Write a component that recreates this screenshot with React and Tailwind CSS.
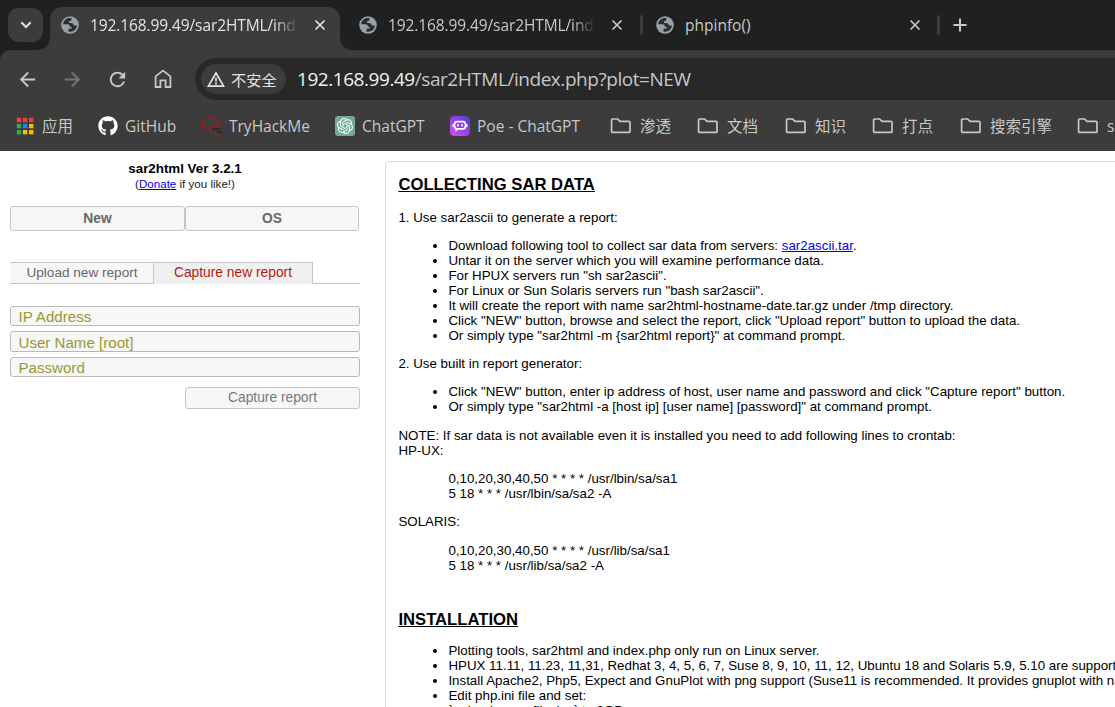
import { MdArrowBack, MdArrowForward, MdRefresh } from "react-icons/md";
import { SiOpenai } from "react-icons/si";
import { FaGithub } from "react-icons/fa";

function Globe() {
  return (
    <svg viewBox="0 0 18 18" className="size-[18px] shrink-0">
      <circle cx="9" cy="9" r="8.8" fill="#9aa0a6" />
      <path d="M10.6 2.2 C6 1.4 2.4 4.4 2.1 8.2 L6.4 8.2 C8.4 8.2 8.8 9.4 8.9 10.6 L10.8 10.9 L10.6 12.4 L7.6 12.8 L7.4 15.6 C11.8 16.6 15.6 13.6 15.9 9.6 L13 9.6 L11.6 7.2 L8.2 6.9 L8 5.2 L10.2 4.4 Z" fill="#2b2e30" />
    </svg>
  );
}

function Close({ className }) {
  return (
    <svg viewBox="0 0 12 12" className={className}>
      <path d="M1.5 1.5 10.5 10.5M10.5 1.5 1.5 10.5" stroke="currentColor" strokeWidth="1.7" />
    </svg>
  );
}

function Folder() {
  return (
    <svg viewBox="0 0 22 18" className="h-[18px] w-[22px] shrink-0" fill="none" stroke="#c7c7c7" strokeWidth="1.7">
      <path d="M2.5 2H7.6L10 4.4H19Q20 4.4 20 5.4V14.4Q20 15.4 19 15.4H2.6Q1.6 15.4 1.6 14.4V3Q1.6 2 2.5 2Z" />
    </svg>
  );
}

const folders = [
  ["渗透", "w-[87px]"],
  ["文档", "w-[88px]"],
  ["知识", "w-[87px]"],
  ["打点", "w-[88px]"],
  ["搜索引擎", "w-[117px]"],
  ["s", "w-[60px]"],
];

const appColors = ["#ea4335", "#ea4335", "#ea4335", "#34a853", "#1a87f0", "#fbbc04", "#34a853", "#fbbc04", "#fbbc04"];

function TabTitle({ children }) {
  return (
    <span className="ml-[11px] w-[212px] overflow-hidden pt-0.5 text-[15.5px] tracking-[-0.1px] whitespace-nowrap [mask-image:linear-gradient(90deg,#000_87%,transparent_98%)]">
      {children}
    </span>
  );
}

function Label({ children }) {
  return <span className="pt-0.5 whitespace-nowrap">{children}</span>;
}

function Browser() {
  return (
    <header className="h-[151px] w-[1115px] bg-[#1f2120] font-['Open_Sans','Noto_Sans_CJK_SC',sans-serif]">
      <div className="flex h-[50px] items-end">
        <div className="mb-2 ml-2 flex h-[34px] w-[35px] items-center justify-center rounded-[11px] bg-[#3c3c3c]">
          <svg viewBox="0 0 12 8" className="h-2 w-3" fill="none" stroke="#e3e3e3" strokeWidth="2"><path d="M1.3 1.3 6 6 10.7 1.3" /></svg>
        </div>
        <svg viewBox="0 0 14 14" className="-ml-[7px] size-[14px] shrink-0"><path d="M0 14H14V0Q14 14 0 14Z" fill="#3c3c3c" /></svg>
        <div className="flex h-[43px] w-[290px] items-center rounded-t-[12px] bg-[#3c3c3c] pb-[7px] pl-[11px] text-[#e3e3e3]">
          <Globe />
          <TabTitle>192.168.99.49/sar2HTML/index</TabTitle>
          <Close className="ml-[12px] size-[12px]" />
        </div>
        <svg viewBox="0 0 14 14" className="size-[14px] shrink-0"><path d="M0 0V14H14Q0 14 0 0Z" fill="#3c3c3c" /></svg>
        <div className="flex h-[43px] items-center pb-[7px] pl-[5px] text-[#c7c7c7]">
          <Globe />
          <TabTitle>192.168.99.49/sar2HTML/index</TabTitle>
          <Close className="ml-[11px] size-[12px]" />
          <div className="ml-[17px] h-5 w-[3px] rounded bg-[#3c3c3c]" />
          <div className="ml-[13px] flex items-center"><Globe /></div>
          <span className="ml-[11px] w-[212px] pt-0.5 text-[15.5px]">phpinfo()</span>
          <Close className="ml-[12px] size-[12px]" />
          <div className="ml-[16px] h-5 w-[3px] rounded bg-[#3c3c3c]" />
          <svg viewBox="0 0 14 14" className="ml-[13px] size-[14px]"><path d="M7 .5V13.5M.5 7H13.5" stroke="currentColor" strokeWidth="2" /></svg>
        </div>
      </div>
      <div className="h-[101px] overflow-hidden rounded-tl-[10px] bg-[#3c3c3c] pt-2">
        <div className="flex h-[42px] items-center">
          <MdArrowBack className="ml-4 size-[23px] text-[#c7c7c7]" />
          <MdArrowForward className="ml-[22px] size-[23px] text-[#757575]" />
          <MdRefresh className="ml-[22px] size-[23px] text-[#c7c7c7]" />
          <svg viewBox="0 0 18 20" className="ml-[25px] h-[20px] w-[18px]" fill="none" stroke="#c7c7c7" strokeWidth="1.8"><path d="M1.6 7.4 9 1.6 16.4 7.4V18H11.6V11.4H6.4V18H1.6Z" /></svg>
          <div className="ml-[23px] flex h-[42px] flex-1 items-center rounded-l-full bg-[#282828] pl-1.5">
            <div className="flex h-[30px] w-[85px] items-center rounded-full bg-[#3c3c3c] pl-[6px] text-[15.2px] text-[#e3e3e3]">
              <svg viewBox="0 0 18 17" className="mr-[6px] h-[17px] w-[18px] shrink-0" fill="none" stroke="#e3e3e3" strokeWidth="1.7"><path d="M9 2 16.6 15.2H1.4ZM9 6.4V10.6M9 11.6V13.4" /></svg>
              <Label>不安全</Label>
            </div>
            <span className="ml-[11px] whitespace-nowrap text-[19px] tracking-[-0.45px] text-[#c7c7c7]"><span className="text-[#f1f1f1]">192.168.99.49</span>/sar2HTML/index.php?plot=NEW</span>
          </div>
        </div>
        <div className="flex h-[51px] items-center pl-4 text-[15.5px] text-[#c7c7c7]">
          <div className="flex w-[82px] shrink-0 items-center">
            <svg viewBox="0 0 18 18" className="mr-[8px] size-[18px] shrink-0">
              {appColors.map((c, i) => <rect key={i} x={0.8 + (i % 3) * 6.1} y={0.8 + Math.floor(i / 3) * 6.1} width="4.4" height="4.4" fill={c} />)}
            </svg>
            <Label>应用</Label>
          </div>
          <div className="flex w-[103px] shrink-0 items-center"><FaGithub className="mr-[7px] size-5 shrink-0 text-white" /><Label>GitHub</Label></div>
          <div className="flex w-[134px] shrink-0 items-center">
            <svg viewBox="0 0 22 20" className="mr-[6px] h-5 w-[22px] shrink-0" fill="none" stroke="#c11111" strokeWidth="1.2">
              <path d="M10.5 12H3.4C.2 11.2.3 7 3.8 6.5 3.8 3.8 5.8 3.2 6.8 3.3 8 .5 12.5.4 13.6 3.4 16.3 2.7 18 4.7 17.3 6.7 19.4 7 18.8 8.6 18.6 9" />
              <path d="M11 10.2H19.5M10.5 16H17M14 18.8H19.5" strokeDasharray="2.5 1" strokeWidth="1.2" />
              <path d="M11.5 13H20M16 16H21" stroke="#272727" strokeDasharray="2.5 .7" strokeWidth="2" />
            </svg>
            <Label>TryHackMe</Label>
          </div>
          <div className="flex w-[115px] shrink-0 items-center"><span className="mr-[7px] flex size-5 shrink-0 items-center justify-center rounded-[3px] bg-[#74aa9c]"><SiOpenai className="size-4 text-white" /></span><Label>ChatGPT</Label></div>
          <div className="flex w-[160px] shrink-0 items-center">
            <svg viewBox="0 0 20 20" className="mr-[7px] size-5 shrink-0"><defs><linearGradient id="poe" x1="1" x2="0" y1="0" y2="1"><stop stopColor="#3b49b5" /><stop offset=".45" stopColor="#983cef" /><stop offset="1" stopColor="#d94ef0" /></linearGradient></defs><rect width="20" height="20" rx="4.5" fill="url(#poe)" /><rect x="4" y="4.8" width="12" height="9" rx="2.5" fill="#fff" /><path d="M2.5 8H4V11H2.5ZM16 8H17.5V11H16ZM5.5 13V16L8.5 13Z" fill="#fff" /><rect x="5.4" y="6.4" width="9.2" height="5.6" rx="2" fill="#8a3de8" /><path d="M8 8V10.4M12 8V10.4" stroke="#fff" strokeWidth="1.5" /></svg>
            <Label>Poe - ChatGPT</Label>
          </div>
          {folders.map(([name, width]) => <div key={name} className={`flex shrink-0 items-center gap-[8px] ${width}`}><Folder /><Label>{name}</Label></div>)}
        </div>
      </div>
    </header>
  );
}

function Field({ children, className }) {
  return <div className={`rounded-[3px] border border-[#b9b9b9] bg-[#f7f7f7] pl-[7.5px] text-left text-[15.1px] text-[#999933] ${className}`}>{children}</div>;
}

function Sidebar() {
  return (
    <aside className="w-[350px] shrink-0 text-center">
      <h1 className="pt-2.5 text-[13.333px] leading-[15px] font-bold">sar2html Ver 3.2.1</h1>
      <p className="text-[11.6px] leading-[15px] text-[#222]">(<a className="text-[#0000ee] underline">Donate</a> if you like!)</p>
      <div className="mt-[15px] flex text-[13.8px] font-bold text-[#666]">
        <div className="h-[25px] w-[175px] rounded-[3px] border border-[#c5c5c5] bg-[#f6f6f6] leading-[23px]">New</div>
        <div className="h-[25px] w-[174px] rounded-[3px] border border-[#c5c5c5] bg-[#f6f6f6] leading-[23px]">OS</div>
      </div>
      <div className="mt-[31px] flex h-[22px] border-b border-[#c5c5c5] text-[13.8px] leading-[20px]">
        <div className="h-[21px] w-[143px] border-t border-[#c5c5c5] bg-[#f7f7f7] pl-px text-[13.6px] text-[#666]">Upload new report</div>
        <div className="h-[22px] w-[160px] border border-b-0 border-[#c5c5c5] bg-[#f0f0f0] text-[#b51a10]">Capture new report</div>
      </div>
      <Field className="mt-[22px] h-5 leading-[20px]">IP Address</Field>
      <Field className="mt-[5px] h-[21px] leading-[22px]">User Name [root]</Field>
      <Field className="mt-[5px] h-5 leading-[20px]">Password</Field>
      <div className="mt-[10px] ml-[175px] h-[22px] rounded-[3px] border border-[#c5c5c5] bg-[#f7f7f7] text-[13.8px] leading-[20px] text-[#777]">Capture report</div>
    </aside>
  );
}

function Content() {
  return (
    <main className="mt-2.5 ml-[25px] h-[700px] w-[760px] shrink-0 rounded-tl-[4px] border border-[#d8d8d8] pt-[13px] pl-[12.4px] text-[13.333px] leading-[15px] whitespace-nowrap">
      <h2 className="text-[16.667px] leading-[19px] font-bold underline">COLLECTING SAR DATA</h2>
      <p className="mt-[16px]">1. Use sar2ascii to generate a report:</p>
      <ul className="mt-[13px] list-disc pl-[50px]">
        <li>Download following tool to collect sar data from servers: <a className="text-[#0000ee] underline">sar2ascii.tar</a>.</li>
        <li>Untar it on the server which you will examine performance data.</li>
        <li>For HPUX servers run "sh sar2ascii".</li>
        <li>For Linux or Sun Solaris servers run "bash sar2ascii".</li>
        <li>It will create the report with name sar2html-hostname-date.tar.gz under /tmp directory.</li>
        <li>Click "NEW" button, browse and select the report, click "Upload report" button to upload the data.</li>
        <li>Or simply type "sar2html -m {"{"}sar2html report{"}"}" at command prompt.</li>
      </ul>
      <p className="mt-[13px]">2. Use built in report generator:</p>
      <ul className="mt-[13px] list-disc pl-[50px]">
        <li>Click "NEW" button, enter ip address of host, user name and password and click "Capture report" button.</li>
        <li>Or simply type "sar2html -a [host ip] [user name] [password]" at command prompt.</li>
      </ul>
      <p className="mt-[14px]">NOTE: If sar data is not available even it is installed you need to add following lines to crontab:</p>
      <p>HP-UX:</p>
      <div className="mt-[13px] pl-[50px]">
        <p>0,10,20,30,40,50 * * * * /usr/lbin/sa/sa1</p>
        <p>5 18 * * * /usr/lbin/sa/sa2 -A</p>
      </div>
      <p className="mt-[13px]">SOLARIS:</p>
      <div className="mt-[14px] pl-[50px]">
        <p>0,10,20,30,40,50 * * * * /usr/lib/sa/sa1</p>
        <p>5 18 * * * /usr/lib/sa/sa2 -A</p>
      </div>
      <h2 className="mt-[37px] text-[16.667px] leading-[19px] font-bold underline">INSTALLATION</h2>
      <ul className="mt-[14px] list-disc pl-[50px]">
        <li>Plotting tools, sar2html and index.php only run on Linux server.</li>
        <li>HPUX 11.11, 11.23, 11,31, Redhat 3, 4, 5, 6, 7, Suse 8, 9, 10, 11, 12, Ubuntu 18 and Solaris 5.9, 5.10 are supported</li>
        <li>Install Apache2, Php5, Expect and GnuPlot with png support (Suse11 is recommended. It provides gnuplot with native</li>
        <li>Edit php.ini file and set:<br />`upload_max_filesize` to 2GB.</li>
      </ul>
    </main>
  );
}

export default function App() {
  return (
    <div className="h-[707px] w-[1115px] overflow-hidden bg-white font-['Liberation_Sans',Arial,sans-serif] text-black">
      <Browser />
      <div className="flex h-[556px] overflow-hidden pl-2.5">
        <Sidebar />
        <Content />
      </div>
    </div>
  );
}
